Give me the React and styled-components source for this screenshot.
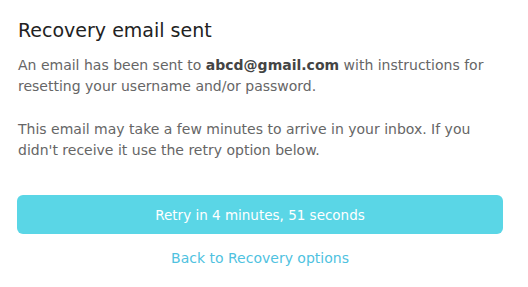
import React from "react";
import styled, { createGlobalStyle } from "styled-components";

const Global = createGlobalStyle`
  html, body { margin: 0; padding: 0; background: #ffffff; }
  body { font-family: "DejaVu Sans", "Noto Sans", sans-serif; }
`;

const Panel = styled.div`
  width: 528px;
  height: 287px;
  box-sizing: border-box;
  padding: 17px 25px 0 17px;
  display: flex;
  flex-direction: column;
`;

const Title = styled.h2`
  margin: 0 0 12px 1px;
  font-size: 19px;
  line-height: 26px;
  font-weight: 500;
  color: #222222;
`;

const Text = styled.p`
  margin: 0 0 ${(p) => p.$gap || 0}px 1px;
  font-size: 14px;
  line-height: 21px;
  color: #666666;
  & strong { color: #444444; font-weight: 700; }
`;

const Button = styled.button`
  margin-top: 34px;
  height: 39px;
  width: 100%;
  border: none;
  border-radius: 6px;
  background: #5ad6e6;
  color: #ffffff;
  font-family: inherit;
  font-size: 13.5px;
  cursor: pointer;
`;

const BackLink = styled.a`
  margin-top: 14px;
  align-self: center;
  font-size: 14px;
  line-height: 20px;
  color: #4fc2df;
  text-decoration: none;
`;

export default function App() {
  return (
    <>
      <Global />
      <Panel>
        <Title>Recovery email sent</Title>
        <Text $gap={22}>
          An email has been sent to <strong>abcd@gmail.com</strong> with instructions for
          resetting your username and/or password.
        </Text>
        <Text>
          This email may take a few minutes to arrive in your inbox. If you
          didn't receive it use the retry option below.
        </Text>
        <Button>Retry in 4 minutes, 51 seconds</Button>
        <BackLink href="#">Back to Recovery options</BackLink>
      </Panel>
    </>
  );
}
